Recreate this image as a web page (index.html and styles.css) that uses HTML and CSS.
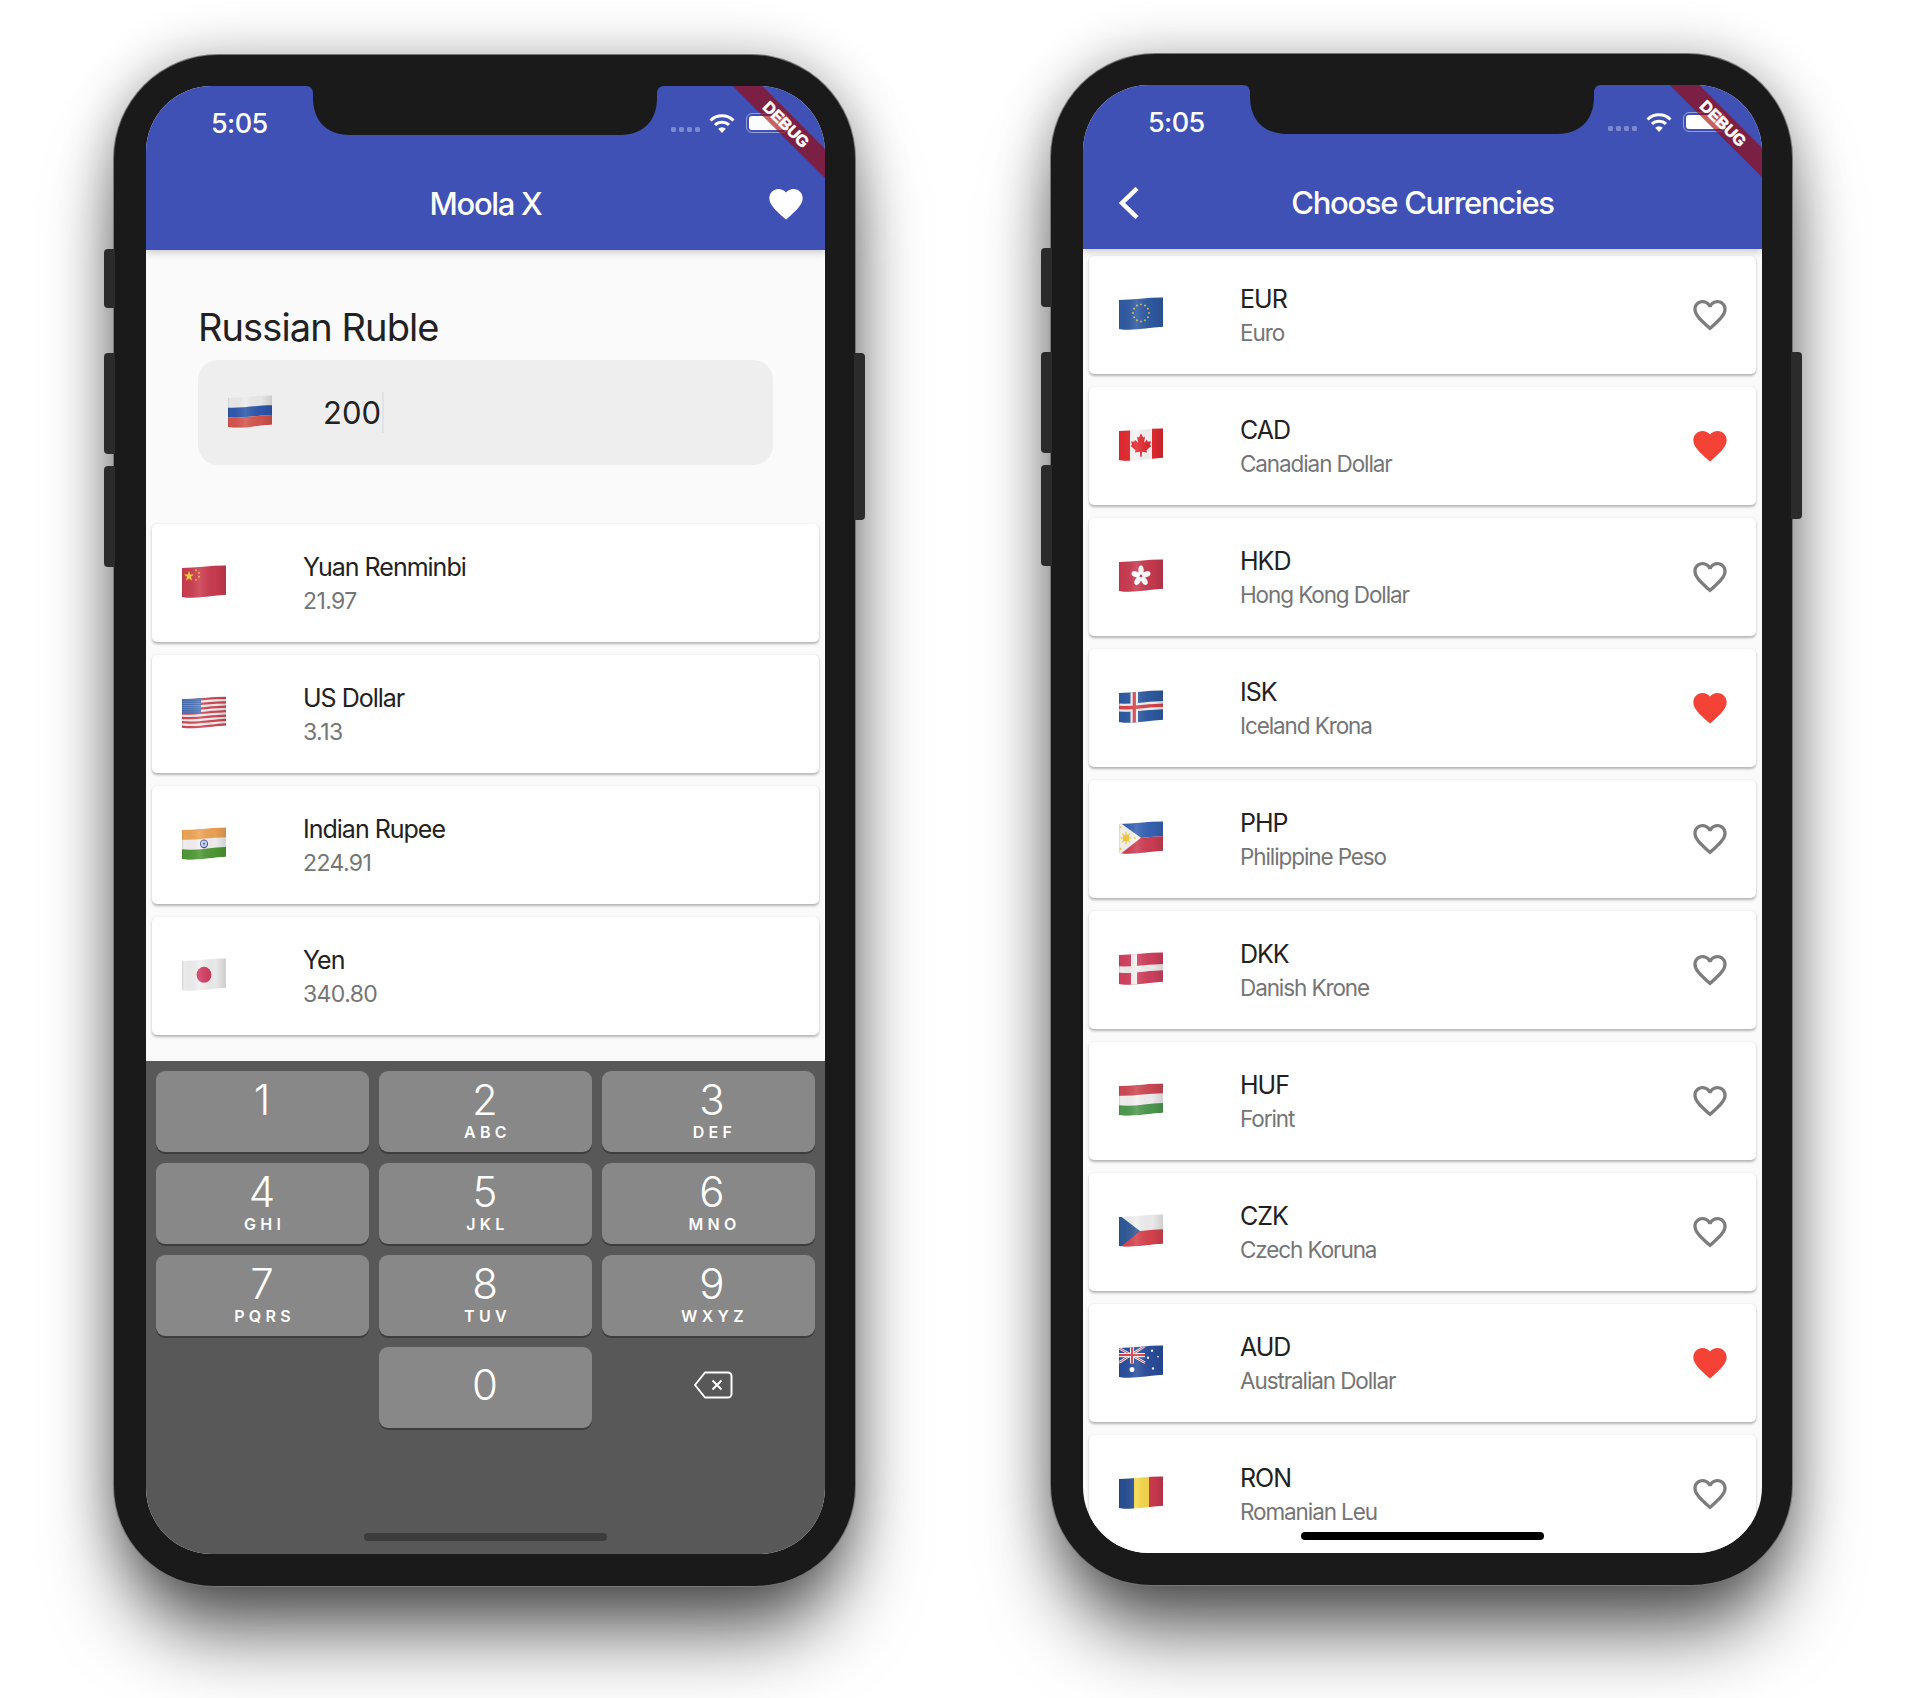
FILE: index.html
```html
<!DOCTYPE html>
<html lang="en">
<head>
<meta charset="utf-8">
<title>Moola X</title>
<link rel="stylesheet" href="styles.css">
</head>
<body>
<svg class="defs" aria-hidden="true">
  <defs>
    <clipPath id="fc"><path d="M0 3C14 2.500 28 .5 44 .5V28C28 28.500 14 32.500 0 30Z"/></clipPath>
    <linearGradient id="fs" x1="0" x2="1" y1="0" y2="0">
      <stop offset="0" stop-color="#000" stop-opacity=".14"/>
      <stop offset=".04" stop-color="#000" stop-opacity=".02"/>
      <stop offset=".4" stop-color="#fff" stop-opacity=".12"/>
      <stop offset=".75" stop-color="#000" stop-opacity=".03"/>
      <stop offset="1" stop-color="#000" stop-opacity=".14"/>
    </linearGradient>
    <pattern id="usdots" width="2" height="2" patternUnits="userSpaceOnUse"><rect width="2" height="2" fill="#3f66ad"/><circle cx="1" cy="1" r=".5" fill="#b9cbe8"/></pattern>
    <symbol id="f-ru" viewBox="0 0 44 32"><g clip-path="url(#fc)"><rect width="44" height="32" fill="#ececec"/><path fill="#2f58ad" d="M0 12C14 12.500 28 9.800 44 9.700V18.800C28 19.200 14 22.500 0 21Z"/><path fill="#d6554e" d="M0 21C14 22.500 28 19.200 44 18.800V28C28 28.500 14 32.500 0 30Z"/><rect width="44" height="32" fill="url(#fs)"/></g></symbol>
    <symbol id="f-cn" viewBox="0 0 44 32"><g clip-path="url(#fc)"><rect width="44" height="32" fill="#cc3d50"/><polygon fill="#f5d33c" points="7,5.500 8.200,9 12,9 9,11.200 10,14.800 7,12.700 4,14.800 5,11.200 2,9 5.800,9"/><circle cx="14" cy="5" r=".9" fill="#f0c840"/><circle cx="17" cy="7.500" r=".9" fill="#f0c840"/><circle cx="17" cy="11" r=".9" fill="#f0c840"/><circle cx="14" cy="14" r=".9" fill="#f0c840"/><rect width="44" height="32" fill="url(#fs)"/></g></symbol>
    <symbol id="f-us" viewBox="0 0 44 32"><g clip-path="url(#fc)"><rect width="44" height="32" fill="#f4f0f0"/><path fill="none" stroke="#cf4a58" stroke-width="2.100" d="M0 4.350C14 4 28 1.900 44 1.880M0 8.400C14 8.500 28 6.100 44 6M0 12.450C14 13 28 10.300 44 10.100M0 16.500C14 17.500 28 14.500 44 14.250M0 20.550C14 22 28 18.700 44 18.400M0 24.600C14 26.500 28 22.900 44 22.500M0 28.650C14 31 28 27.100 44 26.600"/><path fill="url(#usdots)" d="M0 3C7 2.800 13 2.400 19 1.800V16C13 16.600 7 17 0 16.500Z"/><rect width="44" height="32" fill="url(#fs)"/></g></symbol>
    <symbol id="f-in" viewBox="0 0 44 32"><g clip-path="url(#fc)"><rect width="44" height="32" fill="#f4f2f2"/><path fill="#efa555" d="M0 3C14 2.500 28 .5 44 .5V9.700C28 9.800 14 12.500 0 12Z"/><path fill="#4f9a36" d="M0 21C14 22.500 28 19.200 44 18.800V28C28 28.500 14 32.500 0 30Z"/><circle cx="22" cy="15.800" r="3.600" fill="#c9d2ea" stroke="#3e4fa0" stroke-width="1"/><circle cx="22" cy="15.800" r="1" fill="#3e4fa0"/><rect width="44" height="32" fill="url(#fs)"/></g></symbol>
    <symbol id="f-jp" viewBox="0 0 44 32"><g clip-path="url(#fc)"><rect width="44" height="32" fill="#f0f0f0"/><circle cx="22" cy="15.800" r="7.400" fill="#d03a60"/><rect width="44" height="32" fill="url(#fs)"/></g></symbol>
    <symbol id="f-eu" viewBox="0 0 44 32"><g clip-path="url(#fc)"><rect width="44" height="32" fill="#2f5ba3"/><g fill="#e4c44a"><circle cx="22" cy="7" r=".9"/><circle cx="26" cy="8.100" r=".9"/><circle cx="28.900" cy="11" r=".9"/><circle cx="30" cy="15" r=".9"/><circle cx="28.900" cy="19" r=".9"/><circle cx="26" cy="21.900" r=".9"/><circle cx="22" cy="23" r=".9"/><circle cx="18" cy="21.900" r=".9"/><circle cx="15.100" cy="19" r=".9"/><circle cx="14" cy="15" r=".9"/><circle cx="15.100" cy="11" r=".9"/><circle cx="18" cy="8.100" r=".9"/></g><rect width="44" height="32" fill="url(#fs)"/></g></symbol>
    <symbol id="f-ca" viewBox="0 0 44 32"><g clip-path="url(#fc)"><rect width="44" height="32" fill="#f6f4f4"/><rect width="11" height="32" fill="#e32a30"/><rect x="33" width="11" height="32" fill="#e32a30"/><polygon fill="#e32a30" points="22,5 24,9 26,8 25,14 28,11 28.700,13 32,12.400 31,16 32.500,16.800 27.500,21 28,23 23,22.300 22.800,27 21.200,27 21,22.300 16,23 16.500,21 11.500,16.800 13,16 12,12.400 15.300,13 16,11 19,14 18,8 20,9"/><rect width="44" height="32" fill="url(#fs)"/></g></symbol>
    <symbol id="f-hk" viewBox="0 0 44 32"><g clip-path="url(#fc)"><rect width="44" height="32" fill="#c93a50"/><g fill="#fff"><ellipse cx="22" cy="10.500" rx="2.700" ry="4.400"/><ellipse cx="22" cy="10.500" rx="2.700" ry="4.400" transform="rotate(72 22 16)"/><ellipse cx="22" cy="10.500" rx="2.700" ry="4.400" transform="rotate(144 22 16)"/><ellipse cx="22" cy="10.500" rx="2.700" ry="4.400" transform="rotate(216 22 16)"/><ellipse cx="22" cy="10.500" rx="2.700" ry="4.400" transform="rotate(288 22 16)"/></g><rect width="44" height="32" fill="url(#fs)"/></g></symbol>
    <symbol id="f-is" viewBox="0 0 44 32"><g clip-path="url(#fc)"><rect width="44" height="32" fill="#2f5ba3"/><rect x="11.500" width="7.500" height="32" fill="#f2f2f2"/><path fill="none" stroke="#f2f2f2" stroke-width="7.500" d="M0 16.500C14 17.500 28 14.500 44 14.250"/><rect x="13.700" width="3.200" height="32" fill="#d8434b"/><path fill="none" stroke="#d8434b" stroke-width="3.200" d="M0 16.500C14 17.500 28 14.500 44 14.250"/><rect width="44" height="32" fill="url(#fs)"/></g></symbol>
    <symbol id="f-ph" viewBox="0 0 44 32"><g clip-path="url(#fc)"><path fill="#3763b5" d="M0 0H44V14.250C28 14.500 14 17.500 0 16.500Z"/><path fill="#d03e54" d="M0 16.500C14 17.500 28 14.500 44 14.250V32H0Z"/><polygon fill="#f6f4ee" points="0,1 22,15.800 0,32"/><circle cx="7" cy="16" r="3.200" fill="#f2cb3e"/><path stroke="#f2cb3e" stroke-width="1" d="M7 10.500V21.500M1.500 16H12.500M3 12L11 20M3 20L11 12"/><circle cx="1.500" cy="6" r="1" fill="#f2cb3e"/><circle cx="1.500" cy="26" r="1" fill="#f2cb3e"/><circle cx="16" cy="16" r="1" fill="#f2cb3e"/><rect width="44" height="32" fill="url(#fs)"/></g></symbol>
    <symbol id="f-dk" viewBox="0 0 44 32"><g clip-path="url(#fc)"><rect width="44" height="32" fill="#d0425f"/><rect x="12" width="6" height="32" fill="#f4f0f0"/><path fill="none" stroke="#f4f0f0" stroke-width="6" d="M0 16.500C14 17.500 28 14.500 44 14.250"/><rect width="44" height="32" fill="url(#fs)"/></g></symbol>
    <symbol id="f-hu" viewBox="0 0 44 32"><g clip-path="url(#fc)"><rect width="44" height="32" fill="#f2f0f0"/><path fill="#cf4a55" d="M0 3C14 2.500 28 .5 44 .5V9.700C28 9.800 14 12.500 0 12Z"/><path fill="#4e9a50" d="M0 21C14 22.500 28 19.200 44 18.800V28C28 28.500 14 32.500 0 30Z"/><rect width="44" height="32" fill="url(#fs)"/></g></symbol>
    <symbol id="f-cz" viewBox="0 0 44 32"><g clip-path="url(#fc)"><rect width="44" height="32" fill="#f0f0f0"/><path fill="#d8434f" d="M0 16.500C14 17.500 28 14.500 44 14.250V28C28 28.500 14 32.500 0 30Z"/><polygon fill="#2f5a96" points="0,1 21,16 0,32"/><rect width="44" height="32" fill="url(#fs)"/></g></symbol>
    <symbol id="f-au" viewBox="0 0 44 32"><g clip-path="url(#fc)"><rect width="44" height="32" fill="#2b4f9e"/><path stroke="#f2f2f2" stroke-width="2.400" d="M0 3L26 16.500M26 1L0 16.500"/><path stroke="#d8434f" stroke-width=".9" d="M0 3L26 16.500M26 1L0 16.500"/><path stroke="#f2f2f2" stroke-width="4" d="M13 0V17.500M0 9.500H26"/><path stroke="#d8434f" stroke-width="2" d="M13 0V17.500M0 9.500H26"/><circle cx="13" cy="23" r="2.400" fill="#fff"/><circle cx="33" cy="5.500" r="1.100" fill="#fff"/><circle cx="39" cy="11" r=".8" fill="#fff"/><circle cx="29" cy="12" r="1.100" fill="#fff"/><circle cx="34" cy="22" r="1.100" fill="#fff"/><rect width="44" height="32" fill="url(#fs)"/></g></symbol>
    <symbol id="f-ro" viewBox="0 0 44 32"><g clip-path="url(#fc)"><rect width="15" height="32" fill="#2a4f96"/><rect x="15" width="15" height="32" fill="#f6d84a"/><rect x="30" width="14" height="32" fill="#cf3a50"/><rect width="44" height="32" fill="url(#fs)"/></g></symbol>
    <symbol id="hf" viewBox="0 0 24 24"><path d="M12 21.350l-1.450-1.320C5.400 15.360 2 12.280 2 8.500 2 5.420 4.420 3 7.500 3c1.740 0 3.410.81 4.500 2.090C13.090 3.810 14.760 3 16.500 3 19.580 3 22 5.420 22 8.500c0 3.780-3.400 6.860-8.550 11.540L12 21.350z"/></symbol>
    <symbol id="hb" viewBox="0 0 24 24"><path d="M16.500 3c-1.740 0-3.410.81-4.500 2.090C10.910 3.810 9.240 3 7.500 3 4.420 3 2 5.420 2 8.500c0 3.780 3.400 6.860 8.550 11.540L12 21.350l1.450-1.320C18.600 15.360 22 12.280 22 8.500 22 5.420 19.580 3 16.500 3zm-4.400 15.550l-.1.1-.1-.1C7.140 14.240 4 11.390 4 8.500 4 6.500 5.500 5 7.500 5c1.540 0 3.040.99 3.570 2.360h1.870C13.460 5.990 14.960 5 16.500 5c2 0 3.500 1.500 3.500 3.500 0 2.890-3.140 5.740-7.900 10.050z"/></symbol>
    <symbol id="notch" viewBox="0 0 358 49"><path d="M0 0Q7 0 7 8V12C7 34 20 49 44 49H314C338 49 351 34 351 12V8Q351 0 358 0Z"/></symbol>
    <symbol id="wifi" viewBox="0 0 26 20"><path fill="none" stroke="#fff" stroke-width="3" d="M1.500 7.500a16.500 16.500 0 0 1 23 0M6 12a10 10 0 0 1 14 0"/><path fill="#fff" d="M13 20l-3.800-4.300a5.400 5.400 0 0 1 7.600 0z"/></symbol>
  </defs>
</svg>

<main class="page">
  <section class="phone">
    <span class="btn btn-mute"></span><span class="btn btn-up"></span><span class="btn btn-down"></span><span class="btn btn-power"></span>
    <div class="screen">
      <svg class="notch"><use href="#notch"/></svg>
      <div class="banner">DEBUG</div>
      <header class="appbar">
        <div class="status">
          <span class="time">5:05</span>
          <div class="status-right">
            <div class="dots"><i></i><i></i><i></i><i></i></div>
            <svg class="wifi"><use href="#wifi"/></svg>
            <div class="battery"><i></i></div>
          </div>
        </div>
        <div class="titlerow">
          <div class="lead"></div>
          <h1 class="title">Moola X</h1>
          <div class="trail"><svg class="heart heart-white"><use href="#hf"/></svg></div>
        </div>
      </header>
      <div class="converter">
        <div class="hero">
          <h2 class="base-name">Russian Ruble</h2>
          <div class="amount">
            <svg class="flag"><use href="#f-ru"/></svg>
            <span class="amount-value">200</span><span class="caret"></span>
          </div>
        </div>
        <ul class="cards">
          <li class="card"><svg class="flag"><use href="#f-cn"/></svg><div class="card-text"><span class="card-title">Yuan Renminbi</span><span class="card-sub">21.97</span></div></li>
          <li class="card"><svg class="flag"><use href="#f-us"/></svg><div class="card-text"><span class="card-title">US Dollar</span><span class="card-sub">3.13</span></div></li>
          <li class="card"><svg class="flag"><use href="#f-in"/></svg><div class="card-text"><span class="card-title">Indian Rupee</span><span class="card-sub">224.91</span></div></li>
          <li class="card"><svg class="flag"><use href="#f-jp"/></svg><div class="card-text"><span class="card-title">Yen</span><span class="card-sub">340.80</span></div></li>
        </ul>
      </div>
      <div class="keyboard">
        <div class="key"><span class="digit">1</span></div>
        <div class="key"><span class="digit">2</span><span class="letters">ABC</span></div>
        <div class="key key-shift"><span class="digit">3</span><span class="letters">DEF</span></div>
        <div class="key"><span class="digit">4</span><span class="letters">GHI</span></div>
        <div class="key"><span class="digit">5</span><span class="letters">JKL</span></div>
        <div class="key key-shift"><span class="digit">6</span><span class="letters">MNO</span></div>
        <div class="key"><span class="digit">7</span><span class="letters">PQRS</span></div>
        <div class="key"><span class="digit">8</span><span class="letters">TUV</span></div>
        <div class="key key-shift"><span class="digit">9</span><span class="letters">WXYZ</span></div>
        <div class="key key-empty"></div>
        <div class="key key-zero"><span class="digit">0</span></div>
        <div class="key key-empty key-shift key-back">
          <svg class="backspace" viewBox="0 0 40 28"><path fill="none" stroke="#fff" stroke-width="2" stroke-linejoin="round" d="M12 1.500H35a3.500 3.500 0 0 1 3.500 3.500V23a3.500 3.500 0 0 1-3.500 3.500H12L2 14Z"/><path fill="none" stroke="#fff" stroke-width="2" d="M19.500 9.500L28.500 18.500M28.500 9.500L19.500 18.500"/></svg>
        </div>
      </div>
      <div class="home home-dim"></div>
    </div>
  </section>

  <section class="phone phone-second">
    <span class="btn btn-mute"></span><span class="btn btn-up"></span><span class="btn btn-down"></span><span class="btn btn-power"></span>
    <div class="screen">
      <svg class="notch"><use href="#notch"/></svg>
      <div class="banner">DEBUG</div>
      <header class="appbar">
        <div class="status">
          <span class="time">5:05</span>
          <div class="status-right">
            <div class="dots"><i></i><i></i><i></i><i></i></div>
            <svg class="wifi"><use href="#wifi"/></svg>
            <div class="battery"><i></i></div>
          </div>
        </div>
        <div class="titlerow">
          <div class="lead"><svg class="back" viewBox="0 0 20 32"><path fill="none" stroke="#fff" stroke-width="4.500" d="M18 1.500L3 16L18 30.500"/></svg></div>
          <h1 class="title">Choose Currencies</h1>
          <div class="trail"></div>
        </div>
      </header>
      <ul class="cards cards-full">
        <li class="card"><svg class="flag"><use href="#f-eu"/></svg><div class="card-text"><span class="card-title">EUR</span><span class="card-sub card-name">Euro</span></div><svg class="heart heart-off"><use href="#hb"/></svg></li>
        <li class="card"><svg class="flag"><use href="#f-ca"/></svg><div class="card-text"><span class="card-title">CAD</span><span class="card-sub card-name">Canadian Dollar</span></div><svg class="heart heart-on"><use href="#hf"/></svg></li>
        <li class="card"><svg class="flag"><use href="#f-hk"/></svg><div class="card-text"><span class="card-title">HKD</span><span class="card-sub card-name">Hong Kong Dollar</span></div><svg class="heart heart-off"><use href="#hb"/></svg></li>
        <li class="card"><svg class="flag"><use href="#f-is"/></svg><div class="card-text"><span class="card-title">ISK</span><span class="card-sub card-name">Iceland Krona</span></div><svg class="heart heart-on"><use href="#hf"/></svg></li>
        <li class="card"><svg class="flag"><use href="#f-ph"/></svg><div class="card-text"><span class="card-title">PHP</span><span class="card-sub card-name">Philippine Peso</span></div><svg class="heart heart-off"><use href="#hb"/></svg></li>
        <li class="card"><svg class="flag"><use href="#f-dk"/></svg><div class="card-text"><span class="card-title">DKK</span><span class="card-sub card-name">Danish Krone</span></div><svg class="heart heart-off"><use href="#hb"/></svg></li>
        <li class="card"><svg class="flag"><use href="#f-hu"/></svg><div class="card-text"><span class="card-title">HUF</span><span class="card-sub card-name">Forint</span></div><svg class="heart heart-off"><use href="#hb"/></svg></li>
        <li class="card"><svg class="flag"><use href="#f-cz"/></svg><div class="card-text"><span class="card-title">CZK</span><span class="card-sub card-name">Czech Koruna</span></div><svg class="heart heart-off"><use href="#hb"/></svg></li>
        <li class="card"><svg class="flag"><use href="#f-au"/></svg><div class="card-text"><span class="card-title">AUD</span><span class="card-sub card-name">Australian Dollar</span></div><svg class="heart heart-on"><use href="#hf"/></svg></li>
        <li class="card"><svg class="flag"><use href="#f-ro"/></svg><div class="card-text"><span class="card-title">RON</span><span class="card-sub card-name">Romanian Leu</span></div><svg class="heart heart-off"><use href="#hb"/></svg></li>
      </ul>
      <div class="home home-dark"></div>
    </div>
  </section>
</main>
</body>
</html>
```

FILE: styles.css
```css
* { box-sizing: border-box; }
html, body { margin: 0; padding: 0; background: #fff; }
body { width: 1923px; height: 1698px; overflow: hidden; font-family: Inter, "Liberation Sans", sans-serif; color: #1f1f1f; }
.defs { position: absolute; width: 0; height: 0; }

.page { display: flex; align-items: flex-start; gap: 196px; padding: 55px 0 0 114px; }

.phone {
  position: relative; flex: none; width: 741px; height: 1531px; padding: 31px 0 0 32px;
  background: #1a1a1a; border-radius: 104px 104px 100px 100px;
  box-shadow: 0 0 0 1px #777, 0 0 52px rgba(0,0,0,.3), 0 58px 80px -14px rgba(0,0,0,.66);
}
.phone-second { margin-top: -1px; }

.btn { position: absolute; width: 11px; background: #2b2b2b; border-radius: 4px 0 0 4px; }
.btn-mute { left: -10px; top: 194px; height: 59px; }
.btn-up { left: -10px; top: 298px; height: 101px; }
.btn-down { left: -10px; top: 411px; height: 101px; }
.btn-power { right: -10px; top: 298px; height: 167px; border-radius: 0 4px 4px 0; }

.screen { position: relative; width: 679px; height: 1468px; overflow: hidden; border-radius: 66px; background: #fafafa; display: flex; flex-direction: column; }

.notch { position: absolute; z-index: 4; left: 160px; top: 0; width: 358px; height: 49px; fill: #1a1a1a; }

.banner {
  position: absolute; z-index: 5; top: 27px; right: -60px; width: 200px; height: 21px;
  background: rgba(160,0,0,.62); color: #fff; transform: rotate(45deg);
  padding-left: 3px;
  font: 700 16px/22px "Liberation Sans", sans-serif; text-align: center;
  -webkit-text-stroke: .6px #fff;
}

.appbar { flex: none; height: 164px; background: #3f51b5; color: #fff; box-shadow: 0 2px 8px rgba(0,0,0,.22); position: relative; z-index: 2; }
.status { height: 72px; display: flex; padding: 27px 36px 0 65px; justify-content: space-between; }
.time { font-size: 27px; line-height: 22px; font-weight: 500; letter-spacing: -.6px; }
.status-right { display: flex; align-items: flex-start; margin-top: -1px; }
.dots { display: flex; gap: 3px; margin-top: 15px; }
.dots i { width: 5px; height: 5px; border-radius: 1.500px; background: rgba(255,255,255,.32); }
.wifi { width: 26px; height: 20px; margin: 1px 0 0 9px; }
.battery { width: 43px; height: 20px; margin: 1px 0 0 11px; padding: 2px; border-radius: 6px; border: 1.500px solid rgba(255,255,255,.45); }
.battery i { display: block; height: 100%; border-radius: 3px; background: #fff; }

.titlerow { height: 92px; display: grid; grid-template-columns: 1fr auto 1fr; align-items: center; }
.title { margin: 0; font-size: 31px; font-weight: 500; letter-spacing: -1.300px; line-height: 40px; }
.lead { padding-left: 36px; display: flex; }
.trail { display: flex; justify-content: flex-end; padding-right: 19px; }
.back { width: 20px; height: 32px; }

.heart { flex: none; width: 40px; height: 40px; }
.heart-white { fill: #fff; }
.heart-off { fill: #7d7d7d; }
.heart-on { fill: #f44336; }

.converter { flex: 1; min-height: 0; overflow: hidden; }
.hero { padding: 54px 52px 0 52px; }
.base-name { margin: 0 0 10px; font-size: 38px; line-height: 46px; font-weight: 400; letter-spacing: -.9px; color: #212121; }
.amount { height: 105px; border-radius: 20px; background: #eee; display: flex; align-items: center; padding-left: 30px; }
.amount-value { margin-left: 51px; font-size: 31px; letter-spacing: 0; color: #212121; }
.caret { width: 2px; height: 41px; margin-left: 1px; background: #e1e2e8; }

.flag { flex: none; width: 44px; height: 32px; filter: blur(.3px); transform: translateY(-1px) scaleY(1.07); }

.cards { list-style: none; margin: 59px 6px 0; padding: 0; display: flex; flex-direction: column; gap: 13px; }
.cards-full { margin: 7px 6px 0; }
.card { flex: none; height: 118px; display: flex; align-items: center; padding: 0 26px 0 30px; background: #fff; border-radius: 5px; box-shadow: 0 1.500px 2.500px rgba(0,0,0,.28); }
.card-text { flex: 1; margin-left: 77px; display: flex; flex-direction: column; gap: 2px; }
.card-title { font-size: 25px; line-height: 34px; letter-spacing: -1px; color: #212121; }
.card-sub { font-size: 23px; line-height: 30px; letter-spacing: -.6px; color: #757575; }
.card-name { font-size: 22.500px; letter-spacing: -1.100px; }

.keyboard { flex: none; height: 493px; background: #585858; padding: 10px 10px 0; display: grid; grid-template-columns: repeat(3, 213px); grid-auto-rows: 81px; gap: 11px 10px; position: relative; z-index: 3; }
.key { background: #888; border-radius: 9px; box-shadow: 0 2px 0 #3d3d3d; color: #fff; display: flex; flex-direction: column; align-items: center; padding-top: 7px; }
.key-shift { padding-left: 8px; }
.key-empty { background: none; box-shadow: none; }
.key-zero { justify-content: center; padding-top: 0; padding-bottom: 5px; }
.key-back { justify-content: center; padding-top: 0; padding-bottom: 5px; }
.digit { font-size: 42px; line-height: 44px; font-weight: 300; margin-right: 1px; }
.letters { font-size: 16px; line-height: 20px; font-weight: 600; letter-spacing: 4.300px; margin-right: -4px; }
.backspace { width: 40px; height: 28px; }

.home { position: absolute; z-index: 6; left: 218px; bottom: 13px; width: 243px; height: 8px; border-radius: 4px; }
.home-dim { background: #3c3c3c; }
.home-dark { background: #000; }
```
